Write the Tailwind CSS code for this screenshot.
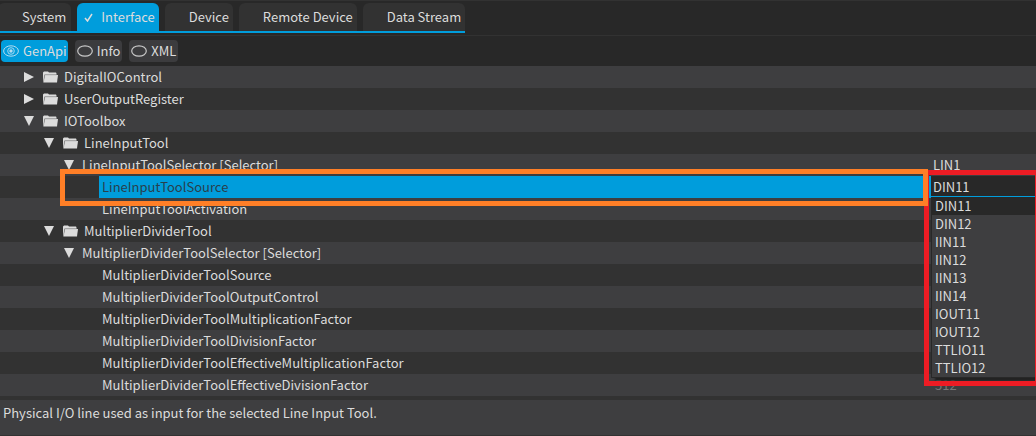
<!DOCTYPE html>
<html lang="en">
<head>
<meta charset="utf-8">
<meta name="viewport" content="width=device-width, initial-scale=1">
<title>GenApi Browser</title>
<script src="https://cdn.jsdelivr.net/npm/@tailwindcss/browser@4"></script>
</head>
<body class="flex min-h-screen flex-col overflow-hidden bg-[#282828] font-['Noto_Sans_CJK_SC','Noto_Sans',sans-serif] text-[13px] leading-[22px] text-[#dcdcdc]">
<svg class="hidden" aria-hidden="true">
  <symbol id="folder" viewBox="0 0 15 12"><path d="M0 10.500V1.500L1 .5h4l1 1h7l.5 1v1.200H1.500L.5 10.500z" fill="#dcdcdc"/><path d="M2 4h13L14 11.500H.3z" fill="#dcdcdc"/><path d="M.5 10.500 1.700 3.800H13.500" fill="none" stroke="#999" stroke-width=".6"/></symbol>
  <symbol id="closed" viewBox="0 0 10 10"><path d="M0 0 10 5 0 10z" fill="#dcdcdc"/></symbol>
  <symbol id="open" viewBox="0 0 10 10"><path d="M0 0H10L5 10z" fill="#dcdcdc"/></symbol>
  <symbol id="oval" viewBox="0 0 16 12"><ellipse cx="8" cy="6" rx="7.300" ry="5.200" fill="none" stroke="#c8c8c8" stroke-width="1.200"/></symbol>
  <symbol id="eye" viewBox="0 0 16 12"><ellipse cx="8" cy="6" rx="7.400" ry="5.200" fill="none" stroke="#b4dcf0"/><circle cx="8" cy="6" r="3.300" fill="none" stroke="#b4dcf0" stroke-width=".9"/><circle cx="8" cy="6" r="1.700" fill="#b4dcf0"/></symbol>
</svg>
<header class="border-t border-[#323232] pt-[2px]">
  <nav class="flex w-fit gap-[6px] border-b-2 border-[#009ddc]" role="tablist" aria-label="Module">
    <button role="tab" class="-ml-[2px] h-7 rounded-t-md bg-[#323232] pr-[5px] pl-6">System</button>
    <button role="tab" aria-selected="true" class="flex h-7 items-center gap-2 rounded-t-md bg-[#009ddc] pr-1 pl-[7px]"><svg class="size-[9px]" viewBox="0 0 9 9"><path d="M1 5 3.500 8 8 1" fill="none" stroke="#dcdcdc" stroke-width="1.500"/></svg>Interface</button>
    <button role="tab" class="h-7 rounded-t-md bg-[#323232] pr-1 pl-6">Device</button>
    <button role="tab" class="h-7 rounded-t-md bg-[#323232] pr-1 pl-6">Remote Device</button>
    <button role="tab" class="h-7 rounded-t-md bg-[#323232] pr-1 pl-6">Data Stream</button>
  </nav>
</header>
<div class="mt-[2px] flex h-[31px] items-start gap-[7px] border-t border-[#323232] px-px pt-1">
  <button class="flex h-[22px] items-center gap-1 rounded-sm bg-[#009ddc] pr-px pl-[2px]"><svg class="h-3 w-4"><use href="#eye"/></svg>GenApi</button>
  <button class="flex h-[22px] items-center gap-1 rounded-sm bg-[#3c3c3e] px-[2px]"><svg class="h-3 w-4"><use href="#oval"/></svg>Info</button>
  <button class="flex h-[22px] items-center gap-1 rounded-sm bg-[#3c3c3e] px-[2px]"><svg class="h-3 w-4"><use href="#oval"/></svg>XML</button>
</div>
<main>
<table class="w-full table-fixed border-separate border-spacing-0" aria-label="Features">
  <colgroup><col><col class="w-[107px]"></colgroup>
  <tbody class="[&>tr]:h-[22px] [&>tr:nth-child(odd)]:bg-[#3e3e40] [&>tr:nth-child(even)]:bg-[#323232]">
    <tr><td><div class="flex items-center pl-6"><svg class="size-[10px]"><use href="#closed"/></svg><svg class="mr-[6px] ml-[9px] h-3 w-[15px]"><use href="#folder"/></svg>DigitalIOControl</div></td><td></td></tr>
    <tr><td><div class="flex items-center pl-6"><svg class="size-[10px]"><use href="#closed"/></svg><svg class="mr-[6px] ml-[9px] h-3 w-[15px]"><use href="#folder"/></svg>UserOutputRegister</div></td><td></td></tr>
    <tr><td><div class="flex items-center pl-6"><svg class="size-[10px]"><use href="#open"/></svg><svg class="mr-[6px] ml-[9px] h-3 w-[15px]"><use href="#folder"/></svg>IOToolbox</div></td><td></td></tr>
    <tr><td><div class="flex items-center pl-11"><svg class="size-[10px]"><use href="#open"/></svg><svg class="mr-[6px] ml-[9px] h-3 w-[15px]"><use href="#folder"/></svg>LineInputTool</div></td><td></td></tr>
    <tr><td><div class="flex items-center gap-2 pl-16"><svg class="size-[10px]"><use href="#open"/></svg>LineInputToolSelector [Selector]</div></td><td class="pl-1">LIN1</td></tr>
    <tr>
      <td class="relative pl-[99px]"><div class="bg-[#009ddc] pl-[3px] text-[#28404c]">LineInputToolSource</div><div class="pointer-events-none absolute top-[-7px] right-px bottom-[-8px] left-[60px] z-30 border-5 border-[#ff7f27]"></div></td>
      <td class="relative border-l-2 border-[#009ddc] bg-[#282828] align-top">
        <select aria-label="LineInputToolSource" class="block h-[21px] w-full appearance-none border-b border-[#009ddc] bg-[#282828] pt-px pl-[2px] leading-5 outline-none"><option>DIN11</option></select>
        <ul role="listbox" aria-label="LineInputToolSource values" class="absolute top-[21px] right-px left-0 z-10 border-b border-l border-[#282828] bg-[#3e3e40] leading-[18px] shadow-[4px_3px_2px_#222] [&>li]:pl-[3px]">
          <li role="option" aria-selected="true" class="bg-[#282828]">DIN11</li><li role="option">DIN12</li><li role="option">IIN11</li><li role="option">IIN12</li><li role="option">IIN13</li><li role="option">IIN14</li><li role="option">IOUT11</li><li role="option">IOUT12</li><li role="option">TTLIO11</li><li role="option">TTLIO12</li>
        </ul>
        <div class="pointer-events-none absolute top-[-6px] right-[-4px] left-[-7px] z-20 h-[216px] border-5 border-[#ed1c24]"></div>
      </td>
    </tr>
    <tr><td class="pl-[102px]">LineInputToolActivation</td><td></td></tr>
    <tr><td><div class="flex items-center pl-11"><svg class="size-[10px]"><use href="#open"/></svg><svg class="mr-[6px] ml-[9px] h-3 w-[15px]"><use href="#folder"/></svg>MultiplierDividerTool</div></td><td></td></tr>
    <tr><td><div class="flex items-center gap-2 pl-16"><svg class="size-[10px]"><use href="#open"/></svg>MultiplierDividerToolSelector [Selector]</div></td><td></td></tr>
    <tr><td class="pl-[102px]">MultiplierDividerToolSource</td><td></td></tr>
    <tr><td class="pl-[102px]">MultiplierDividerToolOutputControl</td><td></td></tr>
    <tr><td class="pl-[102px]">MultiplierDividerToolMultiplicationFactor</td><td></td></tr>
    <tr><td class="pl-[102px]">MultiplierDividerToolDivisionFactor</td><td></td></tr>
    <tr><td class="pl-[102px]">MultiplierDividerToolEffectiveMultiplicationFactor</td><td></td></tr>
    <tr><td class="pl-[102px]">MultiplierDividerToolEffectiveDivisionFactor</td><td class="pl-[6px] text-[#777]">512</td></tr>
  </tbody>
</table>
</main>
<footer class="flex-1 border-t-4 border-b border-t-[#323232] border-b-[#323232] bg-[#3e3e40] px-[3px] pt-[2px]">Physical I/O line used as input for the selected Line Input Tool.</footer>
</body>
</html>
